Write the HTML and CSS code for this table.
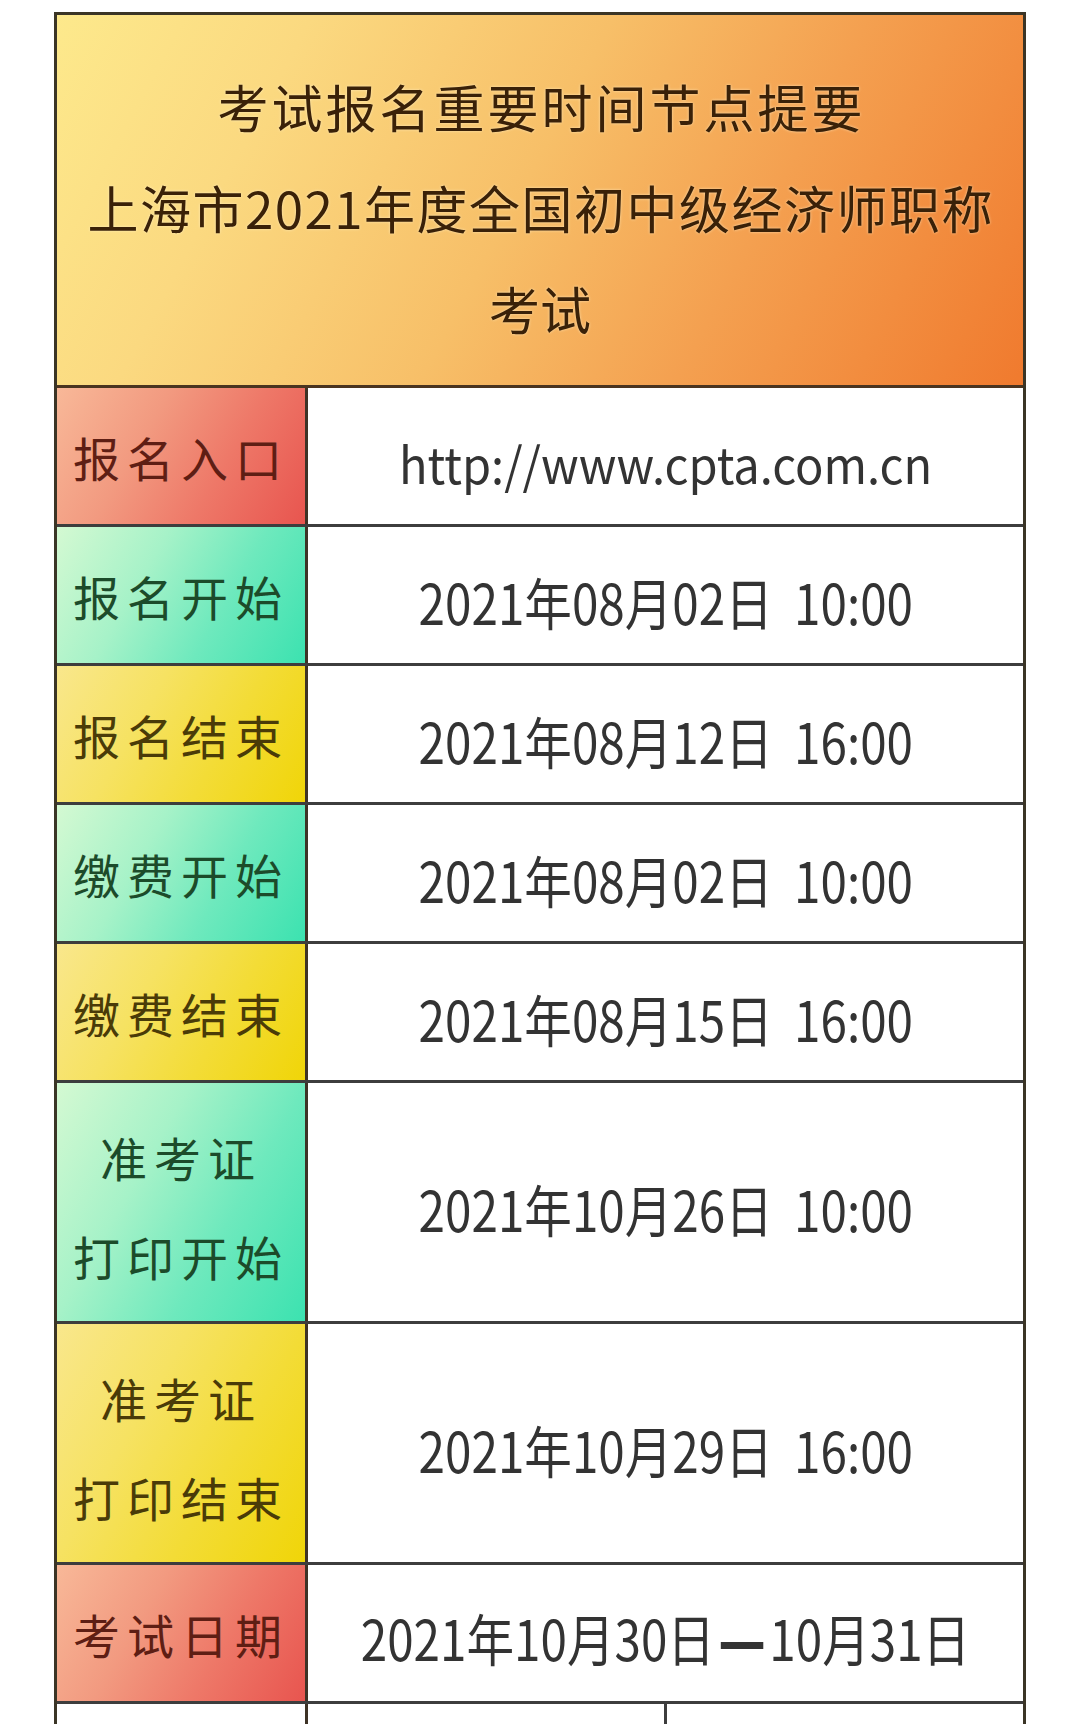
FILE: index.html
```html
<!DOCTYPE html>
<html lang="zh-CN">
<head>
<meta charset="utf-8">
<title>考试报名重要时间节点提要</title>
<link rel="stylesheet" href="styles.css">
</head>
<body>
<div class="sheet">
  <div class="head">
    <p class="head-line wide">考试报名重要时间节点提要</p>
    <p class="head-line mid-line">上海市2021年度全国初中级经济师职称</p>
    <p class="head-line">考试</p>
  </div>

  <div class="row">
    <div class="label red">报名入口</div>
    <div class="value"><span class="url">http://www.cpta.com.cn</span></div>
  </div>
  <div class="row">
    <div class="label green">报名开始</div>
    <div class="value"><span class="date">2021年08月02日  10:00</span></div>
  </div>
  <div class="row">
    <div class="label yellow">报名结束</div>
    <div class="value"><span class="date">2021年08月12日  16:00</span></div>
  </div>
  <div class="row">
    <div class="label green">缴费开始</div>
    <div class="value"><span class="date">2021年08月02日  10:00</span></div>
  </div>
  <div class="row">
    <div class="label yellow">缴费结束</div>
    <div class="value"><span class="date">2021年08月15日  16:00</span></div>
  </div>
  <div class="row tall">
    <div class="label green two">准考证<br>打印开始</div>
    <div class="value"><span class="date">2021年10月26日  10:00</span></div>
  </div>
  <div class="row tall">
    <div class="label yellow two">准考证<br>打印结束</div>
    <div class="value"><span class="date">2021年10月29日  16:00</span></div>
  </div>
  <div class="row">
    <div class="label red">考试日期</div>
    <div class="value"><span class="date">2021年10月30日<span class="dash">—</span>10月31日</span></div>
  </div>
  <div class="row split last">
    <div class="label blank"></div>
    <div class="value mid"></div>
    <div class="value"></div>
  </div>
</div>
</body>
</html>
```

FILE: styles.css
```css
html, body {
  margin: 0;
  padding: 0;
  background: #ffffff;
}

body {
  font-family: "Noto Sans CJK SC", "Noto Sans", sans-serif;
  color: #333333;
}

.sheet {
  width: 966px;
  margin: 12px 0 0 54px;
  border: 3px solid #3b3526;
  border-bottom: none;
}

.head {
  height: 373px;
  box-sizing: border-box;
  padding-top: 41px;
  border-bottom: 3px solid #4a3420;
  background: linear-gradient(118deg, #fde98c 0%, #fbd980 22%, #f7bf68 48%, #f4a050 70%, #f07a2e 100%);
  text-align: center;
}

.head-line {
  margin: 0;
  font-size: 51px;
  line-height: 101px;
  color: #3a2108;
  text-shadow: 0 0 3px rgba(255, 244, 210, 0.7);
}

.head-line.wide {
  letter-spacing: 3px;
  text-indent: 3px;
}

.head-line.mid-line {
  letter-spacing: 1.5px;
  text-indent: 1.5px;
}

.row {
  display: grid;
  grid-template-columns: 251px minmax(0, 1fr);
  height: 139px;
  box-sizing: border-box;
  border-bottom: 3px solid #3d3d3d;
}

.row.tall {
  height: 241px;
}

.row.split {
  grid-template-columns: 251px 359px minmax(0, 1fr);
}

.row.last {
  height: 20px;
  border-bottom: none;
}

.label {
  display: flex;
  align-items: center;
  justify-content: center;
  text-align: center;
  border-right: 3px solid #3e3326;
  font-size: 47px;
  letter-spacing: 7px;
  line-height: 99px;
}

.label.two {
  padding-top: 8px;
  box-sizing: border-box;
}

.label.red {
  background: linear-gradient(120deg, #f8b898 0%, #f29a80 35%, #ee7868 65%, #e8554f 100%);
  color: #5e1e14;
}

.label.green {
  background: linear-gradient(120deg, #d4f9d2 0%, #a6f2c8 35%, #6ee9bd 65%, #3ce2b0 100%);
  color: #1c4b2a;
}

.label.yellow {
  background: linear-gradient(120deg, #f9e78c 0%, #f6e262 35%, #f3dc36 65%, #f0d508 100%);
  color: #4a3b08;
}

.label.blank {
  background: #ffffff;
}

.value {
  display: flex;
  align-items: center;
  justify-content: center;
  box-sizing: border-box;
  min-width: 0;
  padding-top: 12px;
  background: #ffffff;
}

.value.mid {
  border-right: 3px solid #3d3d3d;
}

.date {
  display: inline-block;
  flex: none;
  white-space: pre;
  font-size: 56px;
  line-height: 1;
  color: #333333;
  transform: scaleX(0.85);
}

.dash {
  font-family: "DejaVu Sans", sans-serif;
  font-weight: 700;
  margin: 0 4px;
}

.url {
  display: inline-block;
  flex: none;
  font-size: 50px;
  line-height: 1;
  color: #333333;
  transform: scaleX(0.94);
}
```
